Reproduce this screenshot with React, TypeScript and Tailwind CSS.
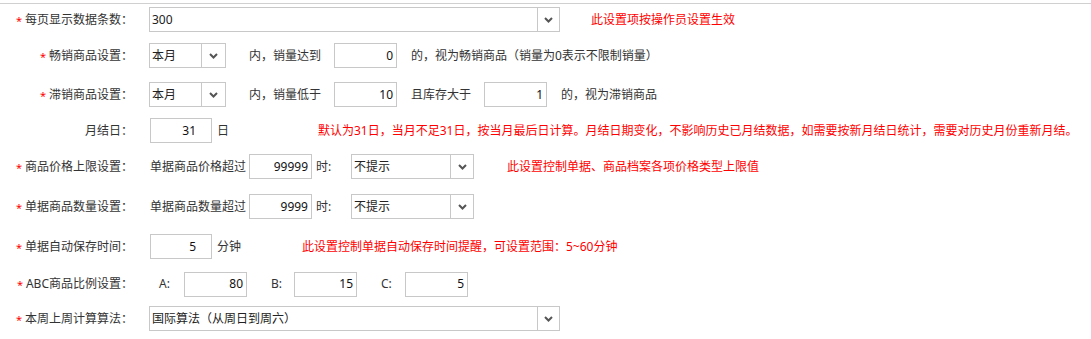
import React from "react";

function Label({ text, required = true }: { text: string; required?: boolean }) {
  return (
    <div className="w-[133px] shrink-0 text-right text-[#333] whitespace-nowrap">
      {required && <span className="text-[#ff0000] text-[11px] mr-[3px] relative top-[1px]">*</span>}
      {text}
    </div>
  );
}

function Select({ value, w, arrow = 22 }: { value: string; w: number; arrow?: number }) {
  return (
    <div
      className="flex h-[25px] shrink-0 border border-[#c8c8c8] bg-white"
      style={{ width: w }}
    >
      <div className="flex-1 flex items-center pl-[2px] text-[#222]">{value}</div>
      <div
        className="flex items-center justify-center border-l border-[#c8c8c8]"
        style={{ width: arrow }}
      >
        <svg width="9" height="6" viewBox="0 0 9 6">
          <path d="M1 1 L4.5 4.5 L8 1" fill="none" stroke="#555" strokeWidth="2" />
        </svg>
      </div>
    </div>
  );
}

function NumInput({ value, w = 63, pad = 3 }: { value: string; w?: number; pad?: number }) {
  return (
    <div
      className="flex h-[25px] shrink-0 items-center justify-end border border-[#c8c8c8] bg-white text-[#111]"
      style={{ width: w, paddingRight: pad }}
    >
      {value}
    </div>
  );
}

const Red = ({ children, className = "" }: { children: React.ReactNode; className?: string }) => (
  <span className={"text-[#ff0000] whitespace-nowrap " + className}>{children}</span>
);

export default function App() {
  return (
    <div className="w-[1091px] h-[339px] bg-white pt-[3px] text-[12px] leading-[16px] font-['Noto_Sans','Noto_Sans_CJK_SC',sans-serif] overflow-hidden">
      <div className="h-px bg-[#d0d0d0]" />

      {/* 每页显示数据条数 */}
      <div className="flex items-center h-[25px] mt-[3px]">
        <Label text="每页显示数据条数：" />
        <div className="ml-[16px]">
          <Select value="300" w={411} />
        </div>
        <Red className="ml-[31px]">此设置项按操作员设置生效</Red>
      </div>

      {/* 畅销商品设置 */}
      <div className="flex items-center h-[25px] mt-[11px] text-[#333]">
        <Label text="畅销商品设置：" />
        <div className="ml-[16px]">
          <Select value="本月" w={77} arrow={24} />
        </div>
        <span className="ml-[23px] w-[72px]">内，销量达到</span>
        <div className="ml-[13px]">
          <NumInput value="0" />
        </div>
        <span className="ml-[14px] whitespace-nowrap">的，视为畅销商品（销量为0表示不限制销量）</span>
      </div>

      {/* 滞销商品设置 */}
      <div className="flex items-center h-[25px] mt-[14px] text-[#333]">
        <Label text="滞销商品设置：" />
        <div className="ml-[16px]">
          <Select value="本月" w={77} arrow={24} />
        </div>
        <span className="ml-[23px] w-[72px]">内，销量低于</span>
        <div className="ml-[13px]">
          <NumInput value="10" />
        </div>
        <span className="ml-[14px] w-[60px]">且库存大于</span>
        <div className="ml-[13px]">
          <NumInput value="1" />
        </div>
        <span className="ml-[14px] whitespace-nowrap">的，视为滞销商品</span>
      </div>

      {/* 月结日 */}
      <div className="flex items-center h-[25px] mt-[11px] text-[#333]">
        <Label text="月结日：" required={false} />
        <div className="ml-[17px]">
          <NumInput value="31" w={62} pad={15} />
        </div>
        <span className="ml-[5px] w-[12px]">日</span>
        <Red className="ml-[89px]">
          默认为31日，当月不足31日，按当月最后日计算。月结日期变化，不影响历史已月结数据，如需要按新月结日统计，需要对历史月份重新月结。
        </Red>
      </div>

      {/* 商品价格上限设置 */}
      <div className="flex items-center h-[25px] mt-[11px] text-[#333]">
        <Label text="商品价格上限设置：" />
        <span className="ml-[17px] w-[96px] whitespace-nowrap">单据商品价格超过</span>
        <div className="ml-[3px]">
          <NumInput value="99999" />
        </div>
        <span className="ml-[4px] w-[16px]">时:</span>
        <div className="ml-[19px]">
          <Select value="不提示" w={123} arrow={23} />
        </div>
        <Red className="ml-[33px]">此设置控制单据、商品档案各项价格类型上限值</Red>
      </div>

      {/* 单据商品数量设置 */}
      <div className="flex items-center h-[25px] mt-[15px] text-[#333]">
        <Label text="单据商品数量设置：" />
        <span className="ml-[17px] w-[96px] whitespace-nowrap">单据商品数量超过</span>
        <div className="ml-[3px]">
          <NumInput value="9999" />
        </div>
        <span className="ml-[4px] w-[16px]">时:</span>
        <div className="ml-[19px]">
          <Select value="不提示" w={123} arrow={23} />
        </div>
      </div>

      {/* 单据自动保存时间 */}
      <div className="flex items-center h-[25px] mt-[15px] text-[#333]">
        <Label text="单据自动保存时间：" />
        <div className="ml-[17px]">
          <NumInput value="5" w={62} pad={15} />
        </div>
        <span className="ml-[5px] w-[24px]">分钟</span>
        <Red className="ml-[61px]">此设置控制单据自动保存时间提醒，可设置范围：5~60分钟</Red>
      </div>

      {/* ABC商品比例设置 */}
      <div className="flex items-center h-[26px] mt-[12px] text-[#333]">
        <Label text="ABC商品比例设置：" />
        <span className="ml-[26px] w-[25px]">A:</span>
        <NumInput value="80" />
        <span className="ml-[24px] w-[23px]">B:</span>
        <NumInput value="15" />
        <span className="ml-[24px] w-[24px]">C:</span>
        <NumInput value="5" />
      </div>

      {/* 本周上周计算算法 */}
      <div className="flex items-center h-[25px] mt-[9px] text-[#333]">
        <Label text="本周上周计算算法：" />
        <div className="ml-[16px]">
          <Select value="国际算法（从周日到周六）" w={411} />
        </div>
      </div>
    </div>
  );
}
